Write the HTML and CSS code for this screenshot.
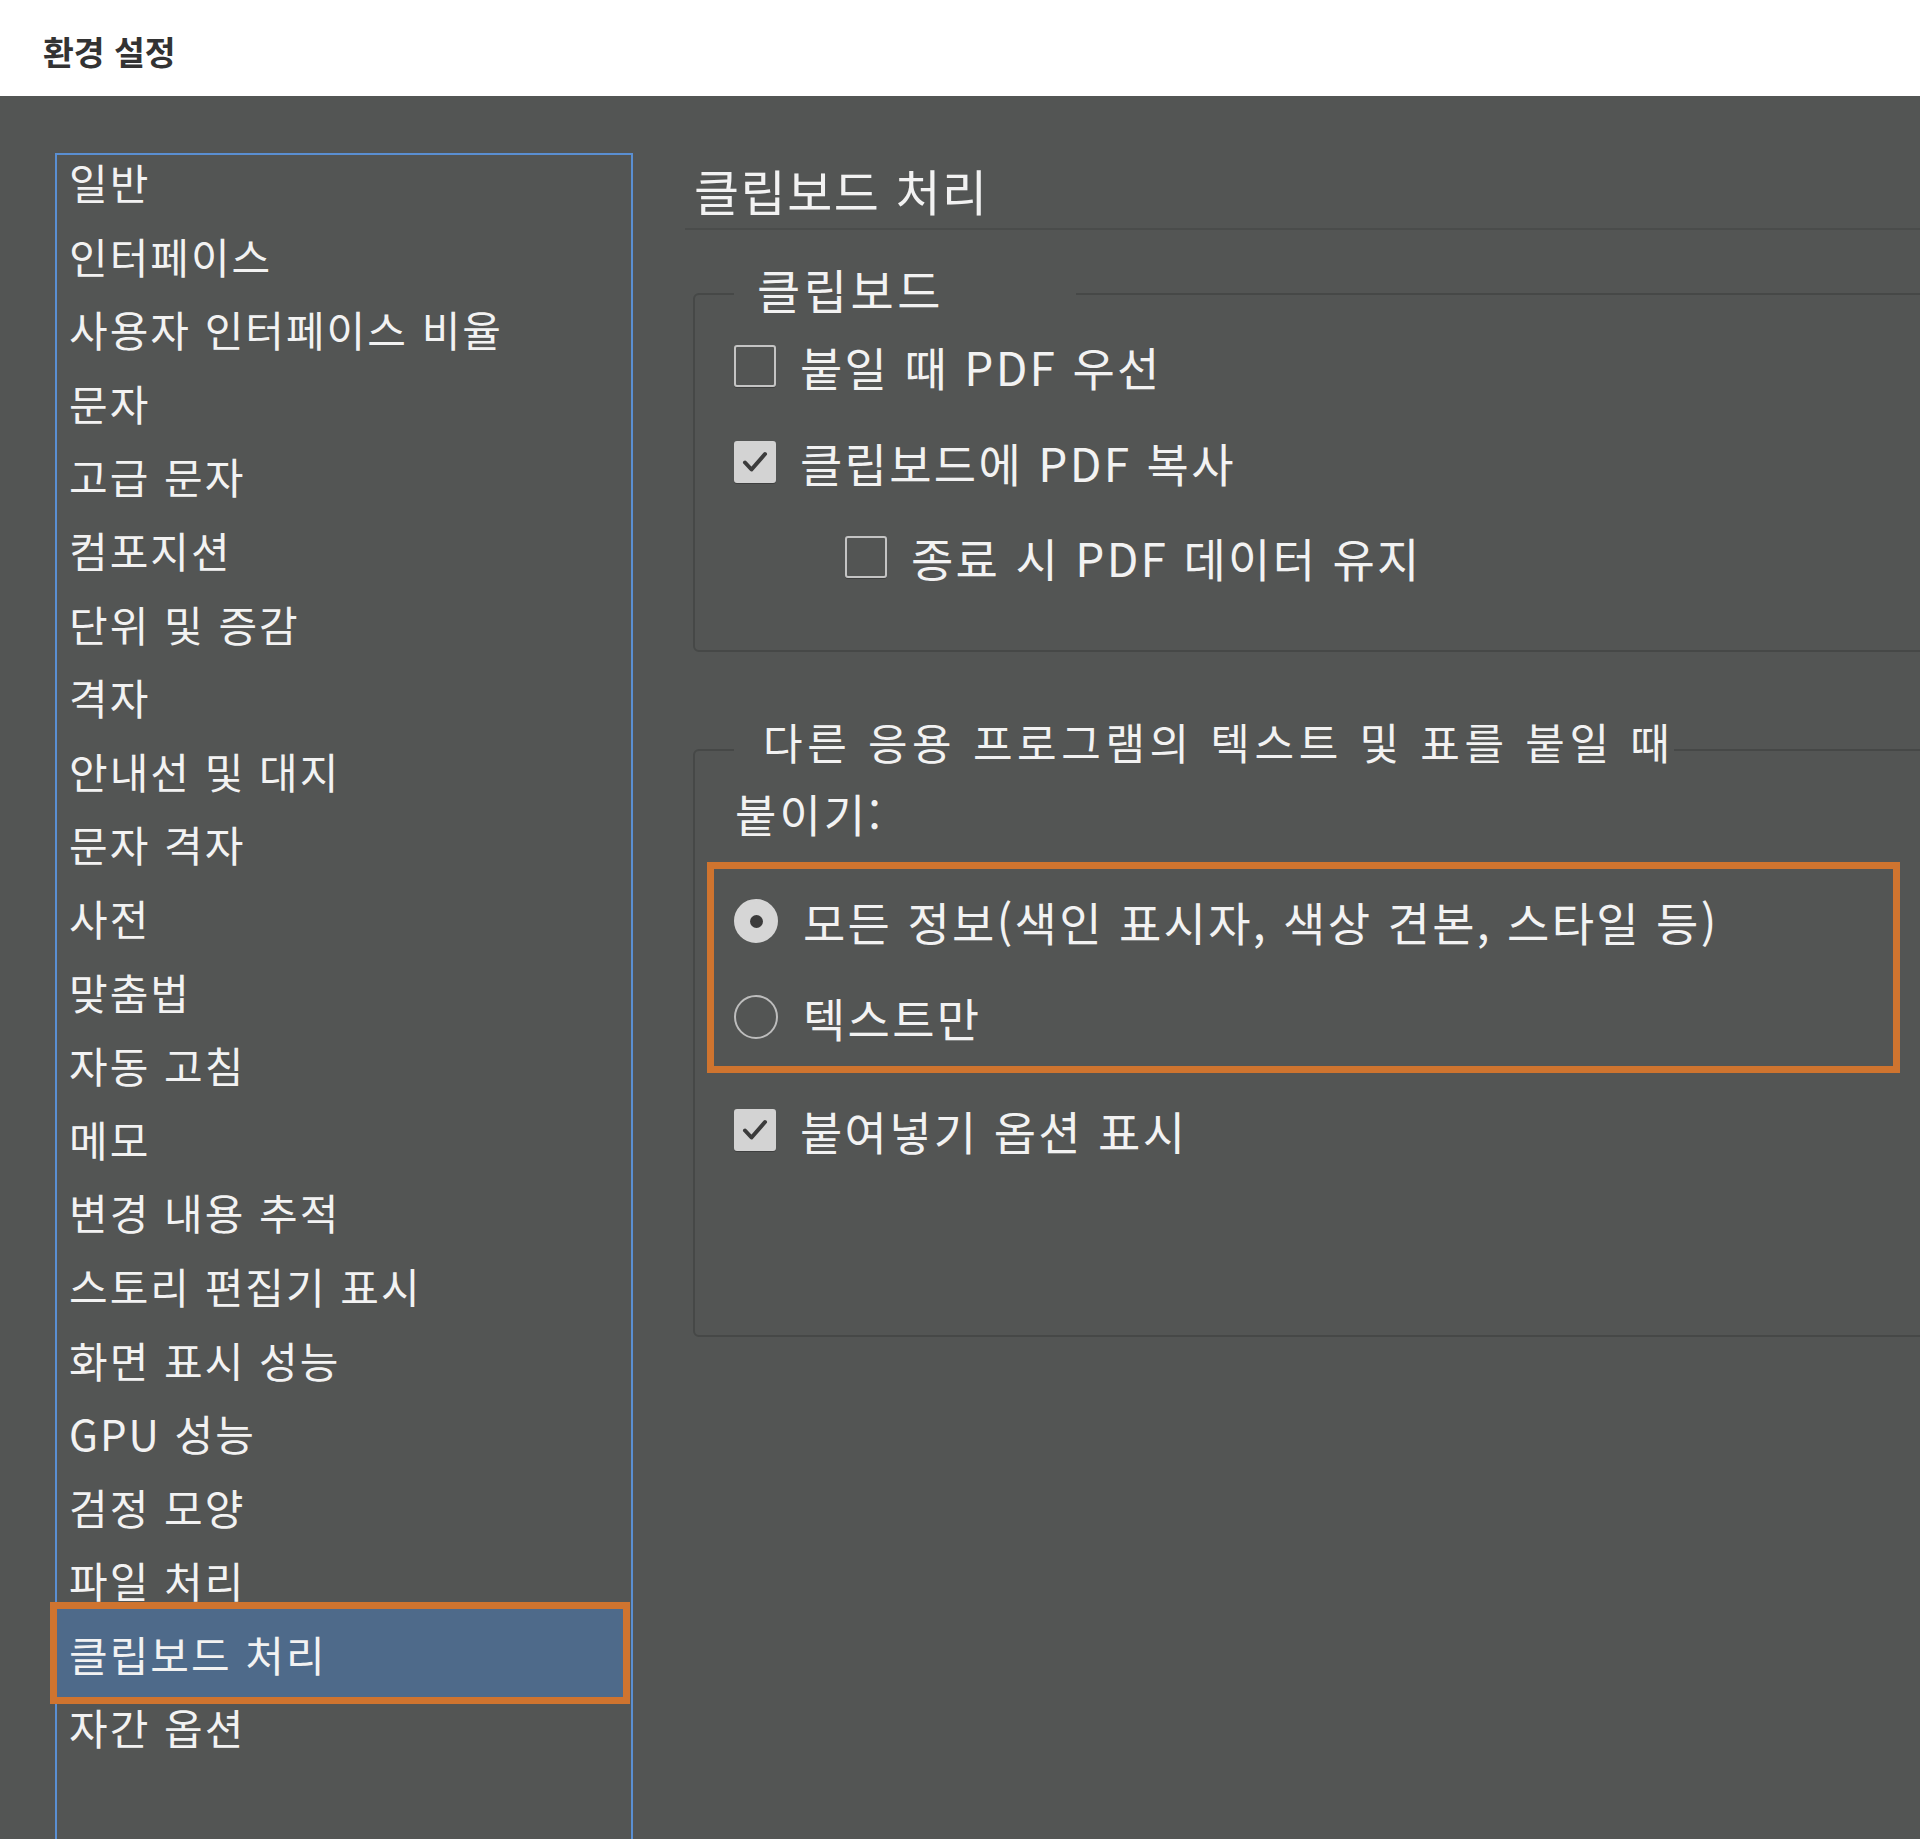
FILE: index.html
```html
<!DOCTYPE html>
<html lang="ko">
<head>
<meta charset="utf-8">
<title>환경 설정</title>
<link rel="stylesheet" href="styles.css">
</head>
<body>
<header class="titlebar"><h1>환경 설정</h1></header>
<div class="main">
  <div class="list">
    <div class="item">일반</div>
    <div class="item">인터페이스</div>
    <div class="item">사용자 인터페이스 비율</div>
    <div class="item">문자</div>
    <div class="item">고급 문자</div>
    <div class="item">컴포지션</div>
    <div class="item">단위 및 증감</div>
    <div class="item">격자</div>
    <div class="item">안내선 및 대지</div>
    <div class="item">문자 격자</div>
    <div class="item">사전</div>
    <div class="item">맞춤법</div>
    <div class="item">자동 고침</div>
    <div class="item">메모</div>
    <div class="item">변경 내용 추적</div>
    <div class="item">스토리 편집기 표시</div>
    <div class="item">화면 표시 성능</div>
    <div class="item">GPU 성능</div>
    <div class="item">검정 모양</div>
    <div class="item">파일 처리</div>
    <div class="item sel"><span>클립보드 처리</span></div>
    <div class="item">자간 옵션</div>
  </div>
  <div class="panel">
    <h2 class="heading">클립보드 처리</h2>
    <fieldset class="group g1">
      <legend class="l1">클립보드</legend>
      <div class="opts">
        <div class="opt"><span class="cb"></span><span class="lbl">붙일 때 PDF 우선</span></div>
        <div class="opt"><span class="cb on"><svg width="30" height="30" viewBox="0 0 30 30"><path d="M5 15.5 L11.5 22.5 L25 7" fill="none" stroke="#3c3c3c" stroke-width="4" stroke-linecap="round" stroke-linejoin="round"/></svg></span><span class="lbl">클립보드에 PDF 복사</span></div>
        <div class="opt indent"><span class="cb"></span><span class="lbl">종료 시 PDF 데이터 유지</span></div>
      </div>
    </fieldset>
    <fieldset class="group g2">
      <legend class="l2">다른 응용 프로그램의 텍스트 및 표를 붙일 때</legend>
      <div class="paste-label">붙이기:</div>
      <div class="radios">
        <div class="opt"><span class="rb on"></span><span class="lbl">모든 정보(색인 표시자, 색상 견본, 스타일 등)</span></div>
        <div class="opt"><span class="rb"></span><span class="lbl">텍스트만</span></div>
      </div>
      <div class="opt after"><span class="cb on"><svg width="30" height="30" viewBox="0 0 30 30"><path d="M5 15.5 L11.5 22.5 L25 7" fill="none" stroke="#3c3c3c" stroke-width="4" stroke-linecap="round" stroke-linejoin="round"/></svg></span><span class="lbl">붙여넣기 옵션 표시</span></div>
    </fieldset>
  </div>
</div>
</body>
</html>
```
FILE: styles.css
```css
html, body {
  margin: 0;
  padding: 0;
}
body {
  width: 1920px;
  height: 1839px;
  overflow: hidden;
  background: #535554;
  color: #f2f2f2;
  font-family: "Noto Sans CJK KR", "Noto Sans", sans-serif;
}
.titlebar {
  height: 96px;
  box-sizing: border-box;
  background: #ffffff;
  padding: 6px 0 0 43px;
  display: flex;
  align-items: center;
}
.titlebar h1 {
  margin: 0;
  font-size: 33.5px;
  font-weight: 700;
  line-height: 1;
  color: #333333;
}
.main {
  display: flex;
  gap: 52px;
  padding-left: 55px;
  height: 1743px;
  overflow: hidden;
}
.list {
  flex: none;
  margin-top: 57px;
  width: 578px;
  height: 1720px;
  box-sizing: border-box;
  border: 2px solid #5a8fd2;
}
.item {
  height: 53.6px;
  line-height: 53.6px;
  padding: 0 0 20px 12px;
  font-size: 42px;
  letter-spacing: 2px;
  white-space: nowrap;
}
.item.sel {
  position: relative;
}
.item.sel::before {
  content: "";
  position: absolute;
  top: -25px;
  bottom: -3.4px;
  left: -7px;
  right: 1px;
  background: #4e6a8a;
  border: 7px solid #cf742f;
}
.item.sel span {
  position: relative;
}
.panel {
  flex: 1;
  min-width: 0;
  padding-top: 64px;
}
.heading {
  margin: 0;
  height: 60px;
  line-height: 60px;
  padding: 0 0 8px 9px;
  font-size: 49px;
  font-weight: 400;
  letter-spacing: 1.5px;
  border-bottom: 2px solid #4a4c4b;
  white-space: nowrap;
}
.group {
  margin: 0 0 0 8px;
  width: 1300px;
  box-sizing: border-box;
  border: 2px solid #464847;
  border-radius: 6px;
  min-inline-size: 0;
}
.g1 {
  margin-top: 29px;
  padding: 7px 0 63px 39px;
}
.g2 {
  margin-top: 61px;
  padding: 2px 0 175px 39px;
}
legend {
  padding: 0;
  margin: 0;
  box-sizing: border-box;
  white-space: nowrap;
}
.l1 {
  width: 342px;
  padding: 0 0 10px 23px;
  line-height: 60px;
  font-size: 47px;
  letter-spacing: 3.5px;
}
.l2 {
  width: 940px;
  padding: 0 0 18px 29px;
  line-height: 56px;
  font-size: 43px;
  letter-spacing: 4.6px;
}
.opts {
  display: flex;
  flex-direction: column;
  gap: 35.5px;
}
.opt {
  height: 60px;
  display: flex;
  align-items: center;
}
.opt.indent {
  padding-left: 111px;
}
.lbl {
  font-size: 46px;
  line-height: 60px;
  letter-spacing: 2.3px;
  white-space: nowrap;
}
.cb {
  flex: none;
  width: 42px;
  height: 42px;
  box-sizing: border-box;
  border: 2px solid #c4c4c4;
  border-radius: 3px;
  margin-right: 24px;
  box-shadow: 0 1px 0 rgba(0, 0, 0, 0.25);
}
.cb.on {
  background: #d3d3d3;
  border-color: #d3d3d3;
  display: flex;
  align-items: center;
  justify-content: center;
}
.paste-label {
  line-height: 50px;
  font-size: 45px;
  letter-spacing: 3px;
  padding-left: 1px;
}
.radios {
  margin: 23px 0 0 -27px;
  width: 1193px;
  box-sizing: border-box;
  border: 7px solid #cf742f;
  padding: 22px 20px 19px 20px;
  display: flex;
  flex-direction: column;
  gap: 36px;
}
.rb {
  flex: none;
  width: 44px;
  height: 44px;
  box-sizing: border-box;
  border-radius: 50%;
  border: 2px solid #bdbdbd;
  margin-right: 25px;
}
.rb.on {
  background: #d6d6d6;
  border-color: #d6d6d6;
  display: flex;
  align-items: center;
  justify-content: center;
}
.rb.on::after {
  content: "";
  width: 13px;
  height: 13px;
  border-radius: 50%;
  background: #3b3b3b;
}
.opt.after {
  margin-top: 27px;
}
```
